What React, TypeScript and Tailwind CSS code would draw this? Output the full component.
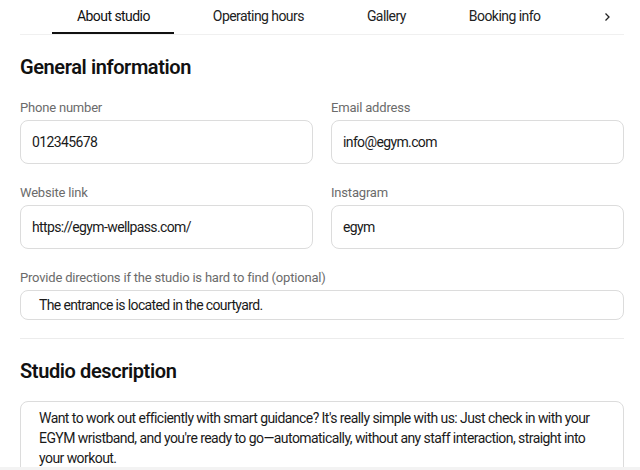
import React from 'react';

const tabs = ['About studio', 'Operating hours', 'Gallery', 'Booking info'];

function Field({ label, value }: { label: string; value: string }) {
  return (
    <div className="flex flex-col">
      <label className="pt-[1px] text-[13px] leading-[20px] text-[#6b6b6b] tracking-[-0.015em]">{label}</label>
      <div className="mt-[2px] h-[44px] rounded-lg border border-[#dcdcdc] flex items-center px-[11px] text-[14px] text-[#1a1a1a] tracking-[-0.045em]">
        {value}
      </div>
    </div>
  );
}

export default function App() {
  return (
    <div
      className="relative w-[640px] h-[470px] overflow-hidden bg-white text-[#111]"
      style={{ fontFamily: 'Roboto, "Noto Sans", sans-serif' }}
    >
      <div className="pl-5 pr-4">
        {/* Tabs */}
        <div className="flex items-stretch h-[35px] border-b border-[#f0f0f0] pl-[32px] tracking-[-0.035em]">
          <div className="flex gap-[15px]">
            {tabs.map((t, i) => (
              <div
                key={t}
                className={
                  'px-6 flex items-center text-[14px] border-b-2 ' +
                  (i === 0 ? 'border-[#111] text-[#111] pl-[25px]' : 'border-transparent text-[#222]')
                }
              >
                {t}
              </div>
            ))}
          </div>
          <div className="ml-auto pr-[12px] flex items-center pb-[1px]">
            <svg width="10" height="10" viewBox="0 0 10 10" fill="none" stroke="#222" strokeWidth="1.3">
              <path d="M3.5 1.5 L7 5 L3.5 8.5" />
            </svg>
          </div>
        </div>

        {/* General information */}
        <h2 className="mt-[19px] text-[20px] leading-[26px] font-semibold tracking-[-0.02em]">General information</h2>

        <div className="mt-[17px] grid grid-cols-2 gap-x-[18px] gap-y-[18px]">
          <Field label="Phone number" value="012345678" />
          <Field label="Email address" value="info@egym.com" />
          <Field label="Website link" value="https://egym-wellpass.com/" />
          <Field label="Instagram" value="egym" />
        </div>

        <div className="mt-[18px]">
          <label className="block pt-[1px] text-[13px] leading-[20px] text-[#6b6b6b] tracking-[-0.015em]">
            Provide directions if the studio is hard to find (optional)
          </label>
          <div className="mt-[2px] h-[30px] rounded-lg border border-[#dcdcdc] flex items-center px-[18px] text-[14px] text-[#1a1a1a] tracking-[-0.045em]">
            The entrance is located in the courtyard.
          </div>
        </div>

        <div className="mt-[18px] border-t border-[#ececec]" />

        <h2 className="mt-[19px] text-[20px] leading-[26px] font-semibold tracking-[-0.02em]">Studio description</h2>

        <div className="mt-[17px] rounded-lg border border-[#dcdcdc] pt-[6px] px-[18px] pb-4 text-[14px] leading-[20px] text-[#1a1a1a] tracking-[-0.04em]">
          Want to work out efficiently with smart guidance? It's really simple with us: Just check in with your
          EGYM wristband, and you're ready to go—automatically, without any staff interaction, straight into
          your workout.
        </div>
      </div>

      <div className="absolute bottom-0 left-0 right-0 h-[3px] bg-[#f3f3f3]" />
    </div>
  );
}
